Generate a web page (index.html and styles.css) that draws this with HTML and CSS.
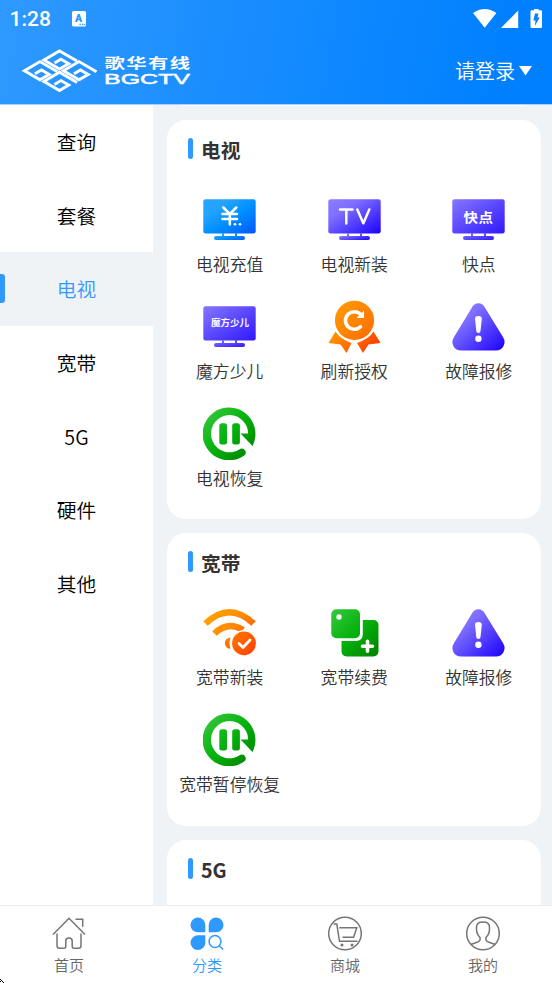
FILE: index.html
```html
<!DOCTYPE html>
<html lang="zh-CN">
<head>
<meta charset="utf-8">
<title>歌华有线</title>
<link rel="stylesheet" href="styles.css">
</head>
<body>
<svg class="defs" width="0" height="0" aria-hidden="true">
  <defs>
    <linearGradient id="blue" x1="0" y1="0" x2="1" y2="1"><stop offset="0" stop-color="#2ba5ff"/><stop offset=".28" stop-color="#22a2ff"/><stop offset=".55" stop-color="#0090ff"/><stop offset="1" stop-color="#0057ff"/></linearGradient>
    <linearGradient id="violet" x1="0" y1="0" x2="1" y2="1"><stop offset="0" stop-color="#8b7cff"/><stop offset=".3" stop-color="#7f70ff"/><stop offset="1" stop-color="#1c00ff"/></linearGradient>
    <linearGradient id="indigo" x1="0" y1="0" x2="1" y2="1"><stop offset="0" stop-color="#8577ff"/><stop offset="1" stop-color="#3018ff"/></linearGradient>
    <linearGradient id="orange" x1="0" y1="0" x2="1" y2="1"><stop offset="0" stop-color="#ff9c00"/><stop offset=".5" stop-color="#ff8500"/><stop offset="1" stop-color="#ff6a00"/></linearGradient>
    <linearGradient id="red" x1="0" y1="0" x2="1" y2="1"><stop offset="0" stop-color="#ff7a00"/><stop offset="1" stop-color="#ff3d00"/></linearGradient>
    <linearGradient id="orangeBox" gradientUnits="userSpaceOnUse" x1="5" y1="5" x2="48" y2="48"><stop offset="0" stop-color="#ffa400"/><stop offset=".45" stop-color="#ff8a00"/><stop offset="1" stop-color="#ff3d00"/></linearGradient>
    <linearGradient id="greenBox" gradientUnits="userSpaceOnUse" x1="5" y1="5" x2="48" y2="48"><stop offset="0" stop-color="#34c63b"/><stop offset=".5" stop-color="#04b20c"/><stop offset="1" stop-color="#008600"/></linearGradient>
    <symbol id="screen" viewBox="0 0 53 53">
      <rect x=".3" y="6.2" width="52.4" height="34.2" rx="2.2"/>
      <path d="M19 40h2v3h11v-3h2v3h6a2 2 0 0 1 0 4h-27a2 2 0 0 1 0-4h6z"/>
    </symbol>
    <symbol id="alert" viewBox="0 0 53 53">
      <path fill="url(#violet)" d="M19.500 8.200Q22 3.300 26.400 3.300T33.300 8.200L51 37Q54 42 51.300 46.500Q49 50.500 44 50.500H9Q4 50.500 1.600 46.500Q-1 42 2 37Z"/>
      <path fill="#fff" d="M23 18.700a3.400 2.600 0 0 1 6.800 0L28.500 31a2.100 2.100 0 0 1-4.200 0Z"/><circle cx="26.400" cy="38.700" r="3.200" fill="#fff"/>
    </symbol>
    <symbol id="resume" viewBox="0 0 53 53">
      <path fill="url(#greenBox)" d="M49.500 39A26.400 26.400 0 1 0 41.500 48.300A3.900 3.900 0 0 0 37.500 41.800A18.600 18.600 0 1 1 45.200 26.500H37.500Z"/>
      <rect x="16.300" y="16.200" width="7.700" height="21.300" rx="2.500" fill="url(#greenBox)"/>
      <rect x="29.200" y="16.200" width="7.700" height="21.300" rx="2.500" fill="url(#greenBox)"/>
    </symbol>
    <symbol id="g" viewBox="-20 -12 40 24" overflow="visible">
      <path d="M17.500 1.100L0 -9.100L-15.600 0L0 9.100L9.200 3.700L1.500 -.8L-5 3" fill="none" stroke="#fff" stroke-width="2.900"/>
    </symbol>
  </defs>
</svg>
<div class="app">
  <header class="header">
    <div class="status">
      <span class="clock">1:28</span>
      <svg class="ime" width="14" height="16" viewBox="0 0 14 16"><rect width="14" height="15.500" rx="1.500" fill="#fff"/><text x="3" y="11.300" class="ime-letter">A</text><path d="M7.500 13.500h1.300M10 13.500h1.300M12.300 13.500h1" stroke="#2894ff" stroke-width="1.300"/></svg>
      <svg class="signals" width="70" height="20" viewBox="0 0 70 20"><path fill="#fff" d="M0 4Q11.700-3.800 23.400 4L11.700 18.700ZM28 19L45.200 1.500V19ZM57.500 2.500q0-1.300 1.300-1.300H61V0h4.500v1.200h2.200q1.300 0 1.300 1.300v15.200q0 1.300-1.300 1.300h-8.900q-1.300 0-1.300-1.300Z"/><path d="M62 4.500h3.500l-1 4h2.300L61.800 17l.7-5.500H60.300Z" fill="#0a80ff"/></svg>
    </div>
    <div class="brand-row">
      <svg class="logo" width="172" height="44" viewBox="0 0 172 44">
        <use href="#g" x="17.500" y="-1" width="40" height="24"/>
        <use href="#g" x="-2" y="9.700" width="40" height="24"/>
        <use href="#g" x="37" y="9.700" width="40" height="24"/>
        <use href="#g" x="17.500" y="20.400" width="40" height="24"/>
        <text class="logo-cn" transform="translate(82.500 19.300) scale(1.450 .950)" textLength="59" lengthAdjust="spacing">歌华有线</text>
        <text class="logo-en" transform="translate(82 34.600)" textLength="86" lengthAdjust="spacingAndGlyphs">BGCTV</text>
      </svg>
      <a class="login">请登录<svg width="13" height="10" viewBox="0 0 13 10"><path d="M0 0h13L6.500 9.500z" fill="#fff"/></svg></a>
    </div>
  </header>
  <div class="body">
    <nav class="side">
      <a>查询</a><a>套餐</a><a class="on">电视</a><a>宽带</a><a>5G</a><a>硬件</a><a>其他</a>
    </nav>
    <main class="content">
      <section class="card previous"></section>
      <section class="card">
        <h2>电视</h2>
        <div class="grid">
          <div class="item"><svg viewBox="0 0 53 53"><use href="#screen" fill="url(#blue)"/><path d="M20.300 14.500l6.500 6.500 6.500-6.500M19.500 21h14.500M19.500 26h14.500M26.800 21v10.500" fill="none" stroke="#fff" stroke-width="2.500" stroke-linecap="round"/><circle cx="32" cy="31.300" r="1.300" fill="#fff"/><circle cx="37" cy="31.300" r="1.300" fill="#fff"/></svg><span>电视充值</span></div>
          <div class="item"><svg viewBox="0 0 53 53"><use href="#screen" fill="url(#violet)"/><path d="M12 16.500h12.500M18.300 16.500v14M29.300 16.500l6 13.800 6-13.800" fill="none" stroke="#fff" stroke-width="2.500" stroke-linecap="round" stroke-linejoin="round"/></svg><span>电视新装</span></div>
          <div class="item"><svg viewBox="0 0 53 53"><use href="#screen" fill="url(#indigo)"/><text class="screen-text" transform="translate(11.500 28.500) scale(1 .900)" font-size="14.500" textLength="29.500">快点</text></svg><span>快点</span></div>
          <div class="item"><svg viewBox="0 0 53 53"><use href="#screen" fill="url(#indigo)"/><text class="screen-text" transform="translate(8 26) scale(1 .950)" font-size="9.500" textLength="38">魔方少儿</text></svg><span>魔方少儿</span></div>
          <div class="item"><svg viewBox="0 0 53 53"><path fill="url(#orangeBox)" d="M7.500 31.500Q11.500 38.500 23.500 43L18.500 53L12.500 44.500L.5 43ZM45.500 31.500Q41.500 38.500 29 43L35 53L40.500 44.500L52.500 43Z"/><circle cx="26.500" cy="20.300" r="19.600" fill="url(#orange)"/><path d="M32.500 14.300A8.800 8.800 0 1 0 32.500 26.700" fill="none" stroke="#fff" stroke-width="3.600" stroke-linecap="round"/><path d="M36 10.500v7.500h-7.500l3-3Z" fill="#fff"/></svg><span>刷新授权</span></div>
          <div class="item"><svg viewBox="0 0 53 53"><use href="#alert"/></svg><span>故障报修</span></div>
          <div class="item"><svg viewBox="0 0 53 53"><use href="#resume"/></svg><span>电视恢复</span></div>
        </div>
      </section>
      <section class="card">
        <h2>宽带</h2>
        <div class="grid">
          <div class="item"><svg viewBox="0 0 53 53"><path d="M2.500 17.500Q26.500-5 50.500 17.500M11.500 27.500Q25 14.500 40 24" fill="none" stroke="url(#orangeBox)" stroke-width="6.400"/><path d="M27.500 31.500a5.600 5.600 0 0 0 0 11.300Q25.500 37 27.500 31.500Z" fill="url(#orangeBox)"/><circle cx="41" cy="37.300" r="13.200" fill="#fff"/><circle cx="41" cy="37.300" r="11.900" fill="url(#red)"/><path d="M36 37.500l4 4 7-7.500" fill="none" stroke="#fff" stroke-width="2.800" stroke-linecap="round" stroke-linejoin="round"/></svg><span>宽带新装</span></div>
          <div class="item"><svg viewBox="0 0 53 53"><rect x="13.500" y="14" width="37" height="36.500" rx="5" fill="url(#greenBox)"/><path fill="#fff" d="M0 0H34.800V28Q34.800 35 28 35H0Z"/><rect x="3.300" y="3.200" width="28.700" height="29" rx="5" fill="url(#greenBox)"/><circle cx="11" cy="11" r="2.700" fill="#fff"/><path d="M34.500 40.200h10M39.500 35.200v10" stroke="#fff" stroke-width="3.600" stroke-linecap="round"/></svg><span>宽带续费</span></div>
          <div class="item"><svg viewBox="0 0 53 53"><use href="#alert"/></svg><span>故障报修</span></div>
          <div class="item"><svg viewBox="0 0 53 53"><use href="#resume"/></svg><span>宽带暂停恢复</span></div>
        </div>
      </section>
      <section class="card"><h2>5G</h2><div class="grid"></div></section>
    </main>
  </div>
  <nav class="tabs">
    <a><svg viewBox="0 0 36 36"><path d="M2 18.500L18 2.300 34 18.500M24.500 3.300h7.200v7.500M6 17.500v12q0 2.800 2.500 2.800h4.300q2 0 2-2v-5.500q0-2.800 3.200-2.800t3.200 2.800v5.500q0 2 2 2h4.300q2.500 0 2.500-2.800v-12"/></svg>首页</a>
    <a class="on"><svg viewBox="0 0 36 36"><path class="solid" d="M16.300 16.300H9A7.400 7.400 0 1 1 16.300 9ZM19.700 16.300V9A7.400 7.400 0 1 1 27 16.300ZM16.300 19.300V27A7.400 7.400 0 1 1 9 19.300Z"/><circle cx="26" cy="25.500" r="5.900"/><path d="M30.300 29.800l3.700 3.700"/></svg>分类</a>
    <a><svg viewBox="0 0 36 36"><circle cx="18" cy="17.500" r="16.300"/><path d="M6.500 8h3.300l2.700 17.300h18M12.300 11.700h17.500l-3.200 9.500H15.500"/><circle class="solid" cx="15" cy="29" r="1.500"/><circle class="solid" cx="25" cy="29" r="1.500"/></svg>商城</a>
    <a><svg viewBox="0 0 36 36"><circle cx="18" cy="17.500" r="16.300"/><path d="M6 28.500q2-1 6-2.300t3-4.700Q11.500 18 11.500 13v-2q0-5 6.500-5t6.500 5v2q0 5-3.500 8.500-1 3.400 3 4.700t6 2.300"/></svg>我的</a>
  </nav>
  <svg class="pointer" width="4" height="4" viewBox="0 0 4 4"><path d="M0 0h1v1h1v1h-1v-1h-1zM0 2h1v1h-1zM2 2h1v1h1v1h-1v-1h-1z"/></svg>
</div>
</body>
</html>
```
FILE: styles.css
```css
* { box-sizing: border-box; }
body {
  margin: 0;
  font-family: "Noto Sans CJK SC", "Noto Sans", sans-serif;
  font-weight: 350;
  color: #333;
  overflow: hidden;
}
.defs { position: absolute; }
.app {
  position: relative;
  width: 552px;
  height: 983px;
  display: flex;
  flex-direction: column;
  background: #fff;
}
.header {
  height: 105px;
  flex: none;
  border-bottom: 1px solid #a5d2ff;
  background: linear-gradient(100deg, #2f99ff 0%, #0080ff 90%);
  background-clip: padding-box;
  color: #fff;
}
.status {
  height: 38px;
  display: flex;
  align-items: center;
  padding: 0 9.500px 0 9.500px;
}
.clock { font: 500 21px/38px Roboto, sans-serif; width: 62.500px; }
.ime-letter { font: 900 10.500px Roboto, sans-serif; fill: #2894ff; }
.signals { margin-left: auto; }
.brand-row {
  display: flex;
  justify-content: space-between;
  align-items: center;
  height: 66px;
  padding: 0 20px 0 22px;
}
.logo { display: block; overflow: visible; }
.logo-cn { font: 700 14px "Noto Sans CJK SC", sans-serif; fill: #fff; }
.logo-en { font: 400 15.500px "Liberation Sans", sans-serif; fill: #fff; stroke: #fff; stroke-width: .5px; }
.login { display: flex; align-items: center; gap: 4px; font-size: 20px; line-height: 28px; }
.body { flex: 1; min-height: 0; display: flex; background: #eff3f6; overflow: hidden; }
.side { width: 153px; flex: none; background: #fff; margin-top: -.4px; }
.side a {
  display: flex;
  align-items: center;
  justify-content: center;
  height: 73.700px;
  font-size: 19.700px;
  color: #000;
  position: relative;
}
.side .on { background: #eff3f6; color: #2f99ff; }
.side .on::before {
  content: "";
  position: absolute;
  left: 0;
  top: 22px;
  width: 5px;
  height: 29px;
  border-radius: 0 3px 3px 0;
  background: #2f99ff;
}
.content {
  flex: 1;
  padding: 0 11px 0 14px;
  display: flex;
  flex-direction: column;
  gap: 14px;
}
.card { flex: none; background: #fff; border-radius: 19px; padding-bottom: 32.900px; }
.previous { height: 40px; padding: 0; margin-top: -38.600px; }
.card h2 {
  margin: 0;
  height: 73px;
  padding: 18px 0 0 21px;
  display: flex;
  align-items: flex-start;
  gap: 8px;
  font-size: 19.700px;
  line-height: 23px;
  font-weight: 700;
}
.card h2::before { content: ""; width: 5px; height: 21px; border-radius: 2.500px; background: #2f99ff; }
.grid {
  display: grid;
  grid-template-columns: repeat(3, 1fr);
  row-gap: 27px;
  padding-left: .4px;
}
.item { height: 79.700px; display: flex; flex-direction: column; align-items: center; }
.item svg { width: 53px; height: 53px; flex: none; display: block; }
.item span { font-size: 16.800px; line-height: 26px; margin-top: 5px; white-space: nowrap; }
.screen-text { font-family: "Noto Sans CJK SC", sans-serif; font-weight: 700; fill: #fff; }
.tabs {
  height: 78px;
  flex: none;
  display: flex;
  background: #fff;
  border-top: 1px solid #e9edf0;
}
.tabs a {
  flex: 1;
  display: flex;
  flex-direction: column;
  align-items: center;
  padding-top: 10px;
  font-size: 15px;
  line-height: 22px;
  color: #666;
}
.tabs svg { width: 36px; height: 36px; margin-bottom: 2px; fill: none; stroke: #757575; stroke-width: 1.500; }
.tabs .solid { fill: #757575; stroke: none; }
.tabs .on { color: #2f99ff; }
.tabs .on svg { stroke: #2f99ff; }
.tabs .on .solid { fill: #2f99ff; }
.pointer { position: absolute; left: 0; bottom: 0; }
```
